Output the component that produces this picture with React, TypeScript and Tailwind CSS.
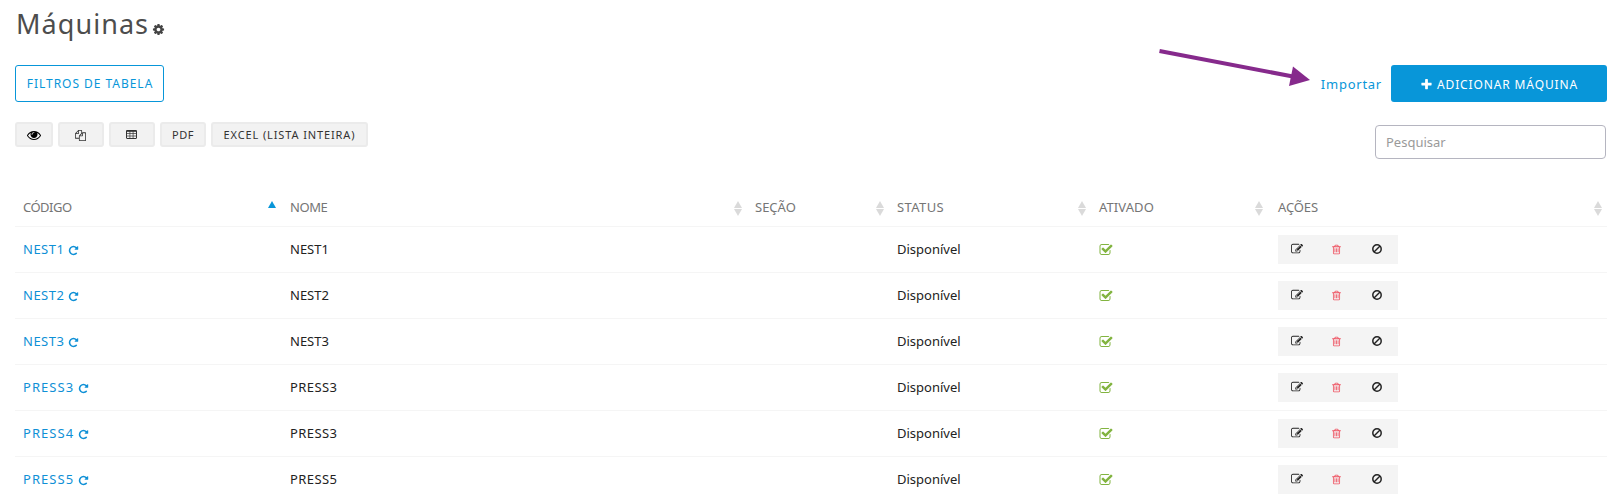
import type { ReactNode } from "react";

const paths = {
  eye: "M1664 960q-152-236-381-353 61 104 61 225 0 185-131.5 316.5t-316.5 131.5-316.5-131.5-131.5-316.5q0-121 61-225-229 117-381 353 133 205 333.5 326.5t434.5 121.5 434.5-121.5 333.5-326.5zm-720-384q0-20-14-34t-34-14q-125 0-214.5 89.5t-89.5 214.5q0 20 14 34t34 14 34-14 14-34q0-86 61-147t147-61q20 0 34-14t14-34zm848 384q0 34-20 69-140 230-376.5 368.5t-499.5 138.5-499.5-139-376.5-368q-20-35-20-69t20-69q140-229 376.5-368t499.5-139 499.5 139 376.5 368q20 35 20 69z",
  repeat: "M1664 256v448q0 26-19 45t-45 19h-448q-42 0-59-40-17-39 14-69l138-138q-148-137-349-137-104 0-198.5 40.5t-163.5 109.5-109.5 163.5-40.5 198.5 40.5 198.5 109.5 163.5 163.5 109.5 198.5 40.5q119 0 225-52t179-147q7-10 23-12 15 0 25 9l137 138q9 8 9.5 20.5t-7.5 22.5q-109 132-264 204.5t-327 72.5q-156 0-298-61t-245-164-164-245-61-298 61-298 164-245 245-164 298-61q147 0 284.5 55.5t244.5 156.5l130-129q29-31 70-14 39 17 39 59z",
  plus: "M1600 736v192q0 40-28 68t-68 28h-416v416q0 40-28 68t-68 28h-192q-40 0-68-28t-28-68v-416h-416q-40 0-68-28t-28-68v-192q0-40 28-68t68-28h416v-416q0-40 28-68t68-28h192q40 0 68 28t28 68v416h416q40 0 68 28t28 68z",
  cog: "M1152 896q0-106-75-181t-181-75-181 75-75 181 75 181 181 75 181-75 75-181zm512-109v222q0 12-8 23t-20 13l-185 28q-19 54-39 91 35 50 107 138 10 12 10 25t-9 23q-27 37-99 108t-94 71q-12 0-26-9l-138-108q-44 23-91 38-16 136-29 186-7 28-36 28h-222q-14 0-24.5-8.5t-11.5-21.5l-28-184q-49-16-90-37l-141 107q-10 9-25 9-14 0-25-11-126-114-165-168-7-10-7-23 0-12 8-23 15-21 51-66.5t54-70.5q-27-50-41-99l-183-27q-13-2-21-12.5t-8-23.5v-222q0-12 8-23t19-13l186-28q14-46 39-92-40-57-107-138-10-12-10-24 0-10 9-23 26-36 98.5-107.5t94.5-71.5q13 0 26 10l138 107q44-23 91-38 16-136 29-186 7-28 36-28h222q14 0 24.5 8.5t11.5 21.5l28 184q49 16 90 37l142-107q9-9 24-9 13 0 25 10 129 119 165 170 7 8 7 22 0 12-8 23-15 21-51 66.5t-54 70.5q26 50 41 98l183 28q13 2 21 12.5t8 23.5z",
  trash: "M704 736v576q0 14-9 23t-23 9h-64q-14 0-23-9t-9-23v-576q0-14 9-23t23-9h64q14 0 23 9t9 23zm256 0v576q0 14-9 23t-23 9h-64q-14 0-23-9t-9-23v-576q0-14 9-23t23-9h64q14 0 23 9t9 23zm256 0v576q0 14-9 23t-23 9h-64q-14 0-23-9t-9-23v-576q0-14 9-23t23-9h64q14 0 23 9t9 23zm128 724v-948h-896v948q0 22 7 40.5t14.5 27 10.5 8.5h832q3 0 10.5-8.5t14.5-27 7-40.5zm-672-1076h448l-48-117q-7-9-17-11h-317q-10 2-17 11zm928 32v64q0 14-9 23t-23 9h-96v948q0 83-47 143.5t-113 60.5h-832q-66 0-113-58.5t-47-141.5v-952h-96q-14 0-23-9t-9-23v-64q0-14 9-23t23-9h309l70-167q15-37 54-63t79-26h320q40 0 79 26t54 63l70 167h309q14 0 23 9t9 23z",
  check: "M1472 930v318q0 119-84.5 203.5t-203.5 84.5h-832q-119 0-203.5-84.5t-84.5-203.5v-832q0-119 84.5-203.5t203.5-84.5h832q63 0 117 25 15 7 18 23 3 17-9 29l-49 49q-10 10-23 10-3 0-9-2-23-6-45-6h-832q-66 0-113 47t-47 113v832q0 66 47 113t113 47h832q66 0 113-47t47-113v-254q0-13 9-22l64-64q10-10 23-10 6 0 12 3 20 8 20 29zm231-489l-814 814q-24 24-57 24t-57-24l-430-430q-24-24-24-57t24-57l110-110q24-24 57-24t57 24l263 263 647-647q24-24 57-24t57 24l110 110q24 24 24 57t-24 57z",
  edit: "M888 1184l116-116-152-152-116 116v56h96v96h56zm440-720q-16-16-33 1l-350 350q-17 17-1 33t33-1l350-350q17-17 1-33zm80 594v190q0 119-84.5 203.5t-203.5 84.5h-832q-119 0-203.5-84.5t-84.5-203.5v-832q0-119 84.5-203.5t203.5-84.5h832q63 0 117 25 15 7 18 23 3 17-9 29l-49 49q-14 14-32 8-23-6-45-6h-832q-66 0-113 47t-47 113v832q0 66 47 113t113 47h832q66 0 113-47t47-113v-126q0-13 9-22l64-64q15-15 35-7t20 29zm-96-738l288 288-672 672h-288v-288zm444 132l-92 92-288-288 92-92q28-28 68-28t68 28l152 152q28 28 28 68t-28 68z",
  files: "M1696 384q40 0 68 28t28 68v1216q0 40-28 68t-68 28h-960q-40 0-68-28t-28-68v-288h-544q-40 0-68-28t-28-68v-672q0-40 20-88t48-76l408-408q28-28 76-48t88-20h416q40 0 68 28t28 68v328q68-40 128-40h416zm-544 213l-299 299h299v-299zm-640-384l-299 299h299v-299zm196 647l316-316v-416h-384v416q0 40-28 68t-68 28h-416v640h512v-256q0-40 20-88t48-76zm956 804v-1152h-384v416q0 40-28 68t-68 28h-416v640h896z",
};

function Icon({ name, className = "" }: { name: keyof typeof paths; className?: string }) {
  return (
    <svg viewBox="0 0 1792 1792" fill="currentColor" className={`shrink-0 ${className}`}>
      <path d={paths[name]} />
    </svg>
  );
}

function TableIcon() {
  return (
    <svg viewBox="0 0 11 9" className="mr-px h-[9px] w-[11px]" fill="none" stroke="currentColor">
      <rect x="0.5" y="0.5" width="10" height="8" rx="0.5" />
      <path d="M0 1.2h11" strokeWidth="1.2" />
      <path d="M1 3.5h9M1 6h9M3.9 1v7.5M7.1 1v7.5" strokeWidth="0.7" />
    </svg>
  );
}

function BanIcon() {
  return (
    <svg viewBox="0 0 10 10" className="size-[10px] text-[#222]" fill="none" stroke="currentColor" strokeWidth="1.5">
      <circle cx="5" cy="5" r="4.2" />
      <path d="M8 2L2 8" />
    </svg>
  );
}

function Sort({ asc }: { asc?: boolean }) {
  return (
    <svg viewBox="0 0 8 15" className={`h-[15px] w-2 ${asc ? "text-[#0896d9]" : "text-[#dadada]"}`} fill="currentColor">
      <path d="M4 0l4 7H0z" />
      {!asc && <path d="M0 8h8l-4 7z" />}
    </svg>
  );
}

function ToolButton({ children, className }: { children: ReactNode; className: string }) {
  return (
    <button className={`flex h-[25px] items-center justify-center rounded-[3px] border-2 border-[#ebebeb] bg-[#f2f2f2] text-[11px] text-[#333] ${className}`}>
      {children}
    </button>
  );
}

const columns = [
  { label: "CÓDIGO", tracking: "tracking-[-0.5px]", pad: "pr-[6px]" },
  { label: "NOME", tracking: "tracking-[-0.4px]", pad: "pr-[5px]" },
  { label: "SEÇÃO", tracking: "tracking-normal", pad: "pr-[5px]" },
  { label: "STATUS", tracking: "tracking-[0.4px]", pad: "pr-[5px]" },
  { label: "ATIVADO", tracking: "tracking-[0.1px]", pad: "pr-[7px]" },
  { label: "AÇÕES", tracking: "tracking-[-0.1px]", pad: "pr-[5px]" },
];

const rows = [
  ["NEST1", "NEST1"],
  ["NEST2", "NEST2"],
  ["NEST3", "NEST3"],
  ["PRESS3", "PRESS3"],
  ["PRESS4", "PRESS3"],
  ["PRESS5", "PRESS5"],
];

const grid = "grid grid-cols-[267px_465px_142px_202px_179px_337px] items-center";

export default function App() {
  return (
    <div className="relative h-[499px] w-[1615px] overflow-hidden bg-white pl-[15px] font-['Noto_Sans',sans-serif] text-[13px] text-[#222]">
      <header className="flex h-[65px] items-start pt-[5px] pl-px">
        <h1 className="text-[27px] leading-[38px] tracking-[1.05px] text-[#4d4d4d]">Máquinas</h1>
        <Icon name="cog" className="mt-[18px] ml-[3px] size-[13px] text-[#444]" />
      </header>

      <div className="flex h-[37px] w-[1592px] items-stretch justify-between">
        <button className="w-[149px] rounded-[3px] border border-[#0896d9] pl-px text-xs tracking-[0.97px] text-[#0896d9]">
          FILTROS DE TABELA
        </button>
        <div className="flex items-center gap-[9px]">
          <a className="pt-0.5 tracking-[0.75px] text-[#0896d9]">Importar</a>
          <button className="flex h-full w-[216px] items-center justify-center gap-1 rounded-[3px] bg-[#0896d9] pt-0.5 text-xs tracking-[0.87px] text-white">
            <Icon name="plus" className="size-[13px]" />
            ADICIONAR MÁQUINA
          </button>
        </div>
      </div>

      <div className="flex h-[80px] w-[1592px] items-start justify-between">
        <div className="flex gap-[5px] pt-5">
          <ToolButton className="w-[38px]">
            <Icon name="eye" className="size-[14px] text-black" />
          </ToolButton>
          <ToolButton className="w-[46px]">
            <Icon name="files" className="mt-px mr-px size-[11px]" />
          </ToolButton>
          <ToolButton className="w-[46px]">
            <TableIcon />
          </ToolButton>
          <ToolButton className="w-[46px] pt-px tracking-[0.6px]">PDF</ToolButton>
          <ToolButton className="w-[157px] pt-px tracking-[0.88px]">EXCEL (LISTA INTEIRA)</ToolButton>
        </div>
        <input
          placeholder="Pesquisar"
          className="mt-[23px] mr-px h-[34px] w-[231px] rounded-[4px] border border-[#b5b5c0] px-[10px] placeholder:text-[#9a9a9a]"
        />
      </div>

      <div className="w-[1592px]">
        <div className={`${grid} h-[45px] border-b border-[#f5f5f5] pt-2 text-[#757575]`}>
          {columns.map((c, i) => (
            <div key={c.label} className={`flex items-center justify-between pl-2 ${c.pad}`}>
              <span className={c.tracking}>{c.label}</span>
              <Sort asc={i === 0} />
            </div>
          ))}
        </div>
        {rows.map(([code, name]) => {
          const press = code.startsWith("PRESS");
          return (
            <div key={code} className={`${grid} h-[46px] border-b border-[#f5f5f5]`}>
              <div className="flex items-center gap-1 pl-2 text-[#0f90d6]">
                <span className={press ? "tracking-[1.05px]" : "tracking-[0.5px]"}>{code}</span>
                <Icon name="repeat" className="mt-0.5 size-[11px]" />
              </div>
              <div className={`pl-2 ${press ? "tracking-[0.4px]" : "tracking-normal"}`}>{name}</div>
              <div />
              <div className="pl-2">Disponível</div>
              <div className="pl-2">
                <Icon name="check" className="size-[14px] text-[#82b440]" />
              </div>
              <div className="pl-2">
                <div className="flex h-[29px] w-[120px] items-center bg-[#f4f4f4] pr-px pb-px">
                  <span className="flex w-10 justify-center">
                    <Icon name="edit" className="mr-px size-3" />
                  </span>
                  <span className="flex w-10 justify-center">
                    <Icon name="trash" className="mr-[2px] size-[11px] text-[#ee4f5e]" />
                  </span>
                  <span className="flex w-10 justify-center">
                    <BanIcon />
                  </span>
                </div>
              </div>
            </div>
          );
        })}
      </div>

      <svg className="absolute top-[45px] left-[1155px] h-[45px] w-[160px]" viewBox="1155 45 160 45">
        <path d="M1159.5 51L1293 76.5" stroke="#862a8c" strokeWidth="4" />
        <path d="M1310 80L1293 66.5L1289 86z" fill="#862a8c" />
      </svg>
    </div>
  );
}
